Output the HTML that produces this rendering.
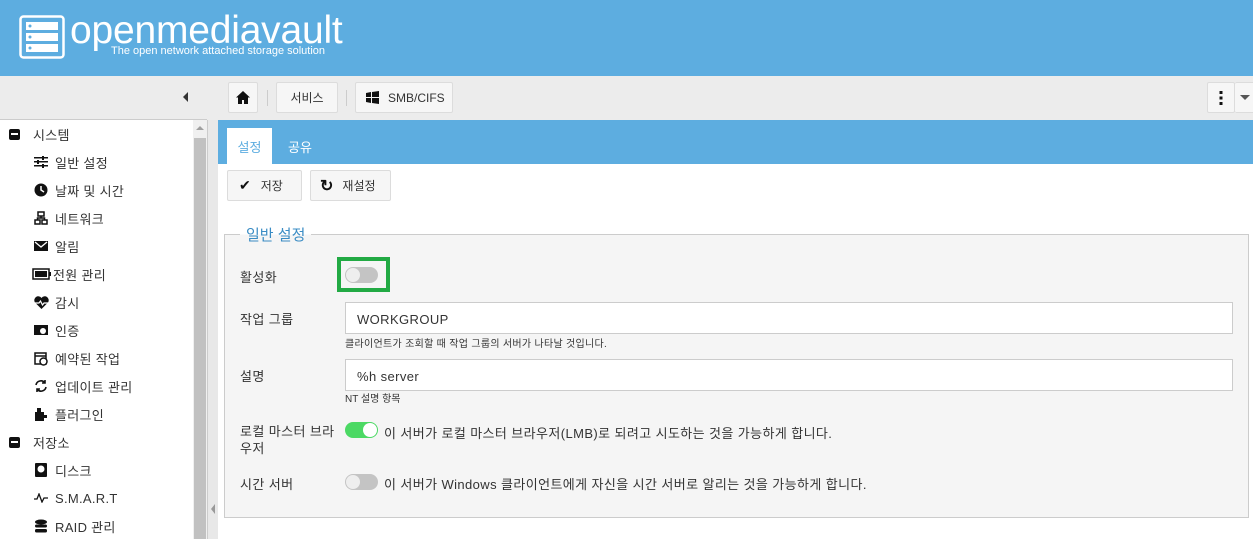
<!DOCTYPE html>
<html><head><meta charset="utf-8"><style>
*{box-sizing:border-box;margin:0;padding:0}
body{width:1253px;height:539px;overflow:hidden;font-family:"Liberation Sans","Noto Sans CJK KR",sans-serif;font-size:13px;color:#333;background:#fff;position:relative}
.a{position:absolute}
#hdr{left:0;top:0;width:1253px;height:76px;background:#5dade0}
#tb{left:0;top:76px;width:1253px;height:44px;background:#ececec}
.btn{position:absolute;background:#f6f6f6;border:1px solid #dcdcdc;border-radius:2px;height:31px;display:flex;align-items:center;font-size:12px;color:#333}
.sep{position:absolute;top:90px;width:1px;height:16px;background:#ccc}
#side{left:0;top:120px;width:193px;height:419px;background:#fff}
.it{position:absolute;font-size:13px;color:#333;display:flex;align-items:center;gap:6px;height:16px;letter-spacing:0.3px}
.ic{width:16px;height:16px;display:inline-flex;align-items:center;justify-content:center}
.ls{letter-spacing:0.4px}
</style></head><body>
<div id="hdr" class="a">
<svg class="a" style="left:19px;top:15px" width="46" height="44" viewBox="0 0 46 44"><rect x="1.5" y="1.5" width="43" height="41" rx="3" fill="none" stroke="#fff" stroke-width="2.5"/><rect x="7" y="7" width="32" height="8" fill="#fff"/><rect x="7" y="18" width="32" height="8" fill="#fff"/><rect x="7" y="29" width="32" height="8" fill="#fff"/><circle cx="11" cy="11" r="1.5" fill="#5dade0"/><circle cx="11" cy="22" r="1.5" fill="#5dade0"/><circle cx="11" cy="33" r="1.5" fill="#5dade0"/></svg>
<div class="a" style="left:70px;top:9px;font-size:39px;color:#fff;letter-spacing:-0.2px">openmediavault</div>
<div class="a" style="left:111px;top:45px;font-size:11px;color:#fff">The open network attached storage solution</div>
</div>
<div id="tb" class="a"></div>
<div class="a" style="left:183px;top:92px;width:0;height:0;border-top:5px solid transparent;border-bottom:5px solid transparent;border-right:5px solid #333"></div>
<div class="btn" style="left:228px;top:82px;width:30px;justify-content:center"><svg width="14" height="13" viewBox="0 0 14 13"><path d="M7 0L0 6.5h2V13h4V9h2v4h4V6.5h2z" fill="#111"/></svg></div>
<div class="sep" style="left:267px"></div>
<div class="btn" style="left:276px;top:82px;width:62px;justify-content:center">서비스</div>
<div class="sep" style="left:346px"></div>
<div class="btn" style="left:355px;top:82px;width:98px;padding-left:10px"><svg width="13" height="13" viewBox="0 0 13 13" fill="#111"><path d="M0 2l5-1v5H0zM6 1l7-1v6H6zM0 7h5v5l-5-1zM6 7h7v6l-7-1z"/></svg><span style="margin-left:9px">SMB/CIFS</span></div>
<div class="btn" style="left:1207px;top:82px;width:28px;justify-content:center"><svg width="4" height="14"><rect x="0.5" y="0" width="3" height="3" fill="#111"/><rect x="0.5" y="5.5" width="3" height="3" fill="#111"/><rect x="0.5" y="11" width="3" height="3" fill="#111"/></svg></div>
<div class="btn" style="left:1235px;top:82px;width:20px;justify-content:center;border-left:none"><div style="width:0;height:0;border-left:5px solid transparent;border-right:5px solid transparent;border-top:5px solid #555"></div></div>

<div id="side" class="a"></div>
<div class="a" style="left:0;top:119px;width:207px;height:1px;background:#ccc"></div>
<div class="a" style="left:193px;top:120px;width:14px;height:419px;background:#f0f0f0"></div>
<div class="a" style="left:194px;top:138px;width:12px;height:401px;background:#c1c1c1"></div>
<div class="a" style="left:196px;top:126px;width:0;height:0;border-left:4px solid transparent;border-right:4px solid transparent;border-bottom:4px solid #a0a0a0"></div>
<div class="a" style="left:207px;top:120px;width:11px;height:419px;background:#e8e8e8;border-left:1px solid #ccc"></div>
<div class="a" style="left:211px;top:504px;width:0;height:0;border-top:5px solid transparent;border-bottom:5px solid transparent;border-right:4px solid #999"></div>

<div class="it" style="left:9px;top:126px"><span style="width:11px;height:11px;background:#111;border-radius:2px;display:inline-block;position:relative"><span style="position:absolute;left:2px;top:4.5px;width:7px;height:2px;background:#fff"></span></span><span style="margin-left:7px">시스템</span></div>
<div class="it" style="left:33px;top:154px"><span class="ic"><svg width="14" height="12" fill="#111"><rect x="0" y="1" width="14" height="1.5"/><rect x="0" y="5" width="14" height="1.5"/><rect x="0" y="9" width="14" height="1.5"/><rect x="8" y="0" width="2" height="4"/><rect x="3" y="4" width="2" height="4"/><rect x="8" y="8" width="2" height="4"/></svg></span>일반 설정</div>
<div class="it" style="left:33px;top:182px"><span class="ic"><svg width="14" height="14"><circle cx="7" cy="7" r="6.5" fill="#111"/><path d="M7 3v4l3 2" stroke="#fff" stroke-width="1.5" fill="none"/></svg></span>날짜 및 시간</div>
<div class="it" style="left:33px;top:210px"><span class="ic"><svg width="14" height="14" fill="none" stroke="#111" stroke-width="1.5"><rect x="4" y="1" width="6" height="4"/><rect x="1" y="9" width="5" height="4"/><rect x="8" y="9" width="5" height="4"/><path d="M7 5v2M3.5 9V7h7v2"/></svg></span>네트워크</div>
<div class="it" style="left:33px;top:238px"><span class="ic"><svg width="14" height="12"><rect x="0" y="1" width="14" height="10" fill="#111"/><path d="M1 2l6 5 6-5" stroke="#fff" stroke-width="1.3" fill="none"/></svg></span>알림</div>
<div class="it" style="left:32px;top:266px;gap:1px"><span class="ic" style="width:20px"><svg width="20" height="12"><rect x="1" y="1" width="16" height="10" fill="none" stroke="#111" stroke-width="1.5"/><rect x="3" y="3" width="12" height="6" fill="#111"/><rect x="17.5" y="4" width="1.5" height="4" fill="#111"/></svg></span>전원 관리</div>
<div class="it" style="left:33px;top:294px"><span class="ic"><svg width="15" height="13"><path d="M7.5 13L1 6.5A3.5 3.5 0 0 1 7.5 2 3.5 3.5 0 0 1 14 6.5z" fill="#111"/><path d="M1 7h4l1.5-2 2 4 1.5-2h4" stroke="#fff" stroke-width="1.2" fill="none"/></svg></span>감시</div>
<div class="it" style="left:33px;top:322px"><span class="ic"><svg width="14" height="13"><rect x="0" y="1" width="14" height="10" fill="#111"/><circle cx="9" cy="7" r="3" fill="#fff"/></svg></span>인증</div>
<div class="it" style="left:33px;top:350px"><span class="ic"><svg width="14" height="15" fill="none" stroke="#111" stroke-width="1.5"><rect x="1" y="2" width="11" height="11"/><circle cx="9.5" cy="10.5" r="3.5" fill="#fff"/><path d="M1 5h11"/></svg></span>예약된 작업</div>
<div class="it" style="left:33px;top:378px"><span class="ic"><svg width="14" height="14" fill="none" stroke="#111" stroke-width="1.6"><path d="M2 6a5 5 0 0 1 9-2M12 8a5 5 0 0 1-9 2"/><path d="M11 1v3H8M3 13v-3h3"/></svg></span>업데이트 관리</div>
<div class="it" style="left:33px;top:406px"><span class="ic"><svg width="14" height="14" fill="#111"><rect x="1" y="5" width="9" height="9"/><rect x="3" y="1" width="4" height="5"/><rect x="9" y="8" width="4" height="3"/></svg></span>플러그인</div>
<div class="it" style="left:9px;top:434px"><span style="width:11px;height:11px;background:#111;border-radius:2px;display:inline-block;position:relative"><span style="position:absolute;left:2px;top:4.5px;width:7px;height:2px;background:#fff"></span></span><span style="margin-left:7px">저장소</span></div>
<div class="it" style="left:33px;top:462px"><span class="ic"><svg width="12" height="14"><rect x="0" y="0" width="12" height="14" rx="1" fill="#111"/><circle cx="6" cy="6" r="3.5" fill="#fff"/></svg></span>디스크</div>
<div class="it" style="left:33px;top:490px"><span class="ic"><svg width="14" height="10" fill="none" stroke="#111" stroke-width="1.3"><path d="M0 6h3l2-5 3 8 2-4h4"/></svg></span>S.M.A.R.T</div>
<div class="it" style="left:33px;top:518px"><span class="ic"><svg width="14" height="15" fill="#111"><ellipse cx="7" cy="3" rx="6" ry="2.5"/><rect x="1" y="5.5" width="12" height="3" rx="1.5"/><rect x="1" y="10" width="12" height="3.5" rx="1.5"/></svg></span>RAID 관리</div>

<div class="a" style="left:218px;top:120px;width:1035px;height:44px;background:#5dade0"></div>
<div class="a" style="left:227px;top:128px;width:45px;height:36px;background:#fff;color:#5dade0;display:flex;align-items:center;justify-content:center">설정</div>
<div class="a" style="left:288px;top:137px;color:#fff">공유</div>
<div class="btn" style="left:227px;top:170px;width:75px;padding-left:11px"><span style="font-size:14px;color:#111">✔</span><span style="margin-left:10px">저장</span></div>
<div class="btn" style="left:310px;top:170px;width:81px;padding-left:9px"><span style="font-size:16px;font-weight:bold;color:#111">↻</span><span style="margin-left:9px">재설정</span></div>

<div class="a" style="left:224px;top:234px;width:1025px;height:284px;background:#f5f5f5;border:1px solid #ccc"></div>
<div class="a" style="left:240px;top:224px;padding:0 6px;color:#3a8cc4;font-size:15px;background:linear-gradient(#fff 50%,#f5f5f5 50%)">일반 설정</div>

<div class="a ls" style="left:240px;top:267px">활성화</div>
<div class="a" style="left:337px;top:257px;width:53px;height:35px;border:4px solid #22aa44"></div>
<div class="a" style="left:345px;top:267px;width:33px;height:16px;border-radius:8px;background:#c4c4c4"><div style="position:absolute;left:1px;top:1px;width:14px;height:14px;border-radius:7px;background:#eee"></div></div>

<div class="a ls" style="left:240px;top:309px">작업 그룹</div>
<div class="a ls" style="left:345px;top:302px;width:888px;height:32px;background:#fff;border:1px solid #ccc;padding:9px 0 0 11px">WORKGROUP</div>
<div class="a" style="left:345px;top:335px;font-size:10px;color:#333;letter-spacing:0.3px">클라이언트가 조회할 때 작업 그룹의 서버가 나타날 것입니다.</div>

<div class="a ls" style="left:240px;top:366px">설명</div>
<div class="a ls" style="left:345px;top:359px;width:888px;height:32px;background:#fff;border:1px solid #ccc;padding:9px 0 0 11px">%h server</div>
<div class="a" style="left:345px;top:390px;font-size:10px;color:#333">NT 설명 항목</div>

<div class="a ls" style="left:240px;top:423px;line-height:17px">로컬 마스터 브라<br>우저</div>
<div class="a" style="left:345px;top:422px;width:33px;height:16px;border-radius:8px;background:#4cd964"><div style="position:absolute;right:1px;top:1px;width:14px;height:14px;border-radius:7px;background:#fff"></div></div>
<div class="a ls" style="left:384px;top:423px">이 서버가 로컬 마스터 브라우저(LMB)로 되려고 시도하는 것을 가능하게 합니다.</div>

<div class="a ls" style="left:240px;top:474px">시간 서버</div>
<div class="a" style="left:345px;top:474px;width:33px;height:16px;border-radius:8px;background:#c4c4c4"><div style="position:absolute;left:1px;top:1px;width:14px;height:14px;border-radius:7px;background:#eee"></div></div>
<div class="a ls" style="left:384px;top:474px">이 서버가 Windows 클라이언트에게 자신을 시간 서버로 알리는 것을 가능하게 합니다.</div>
</body></html>
